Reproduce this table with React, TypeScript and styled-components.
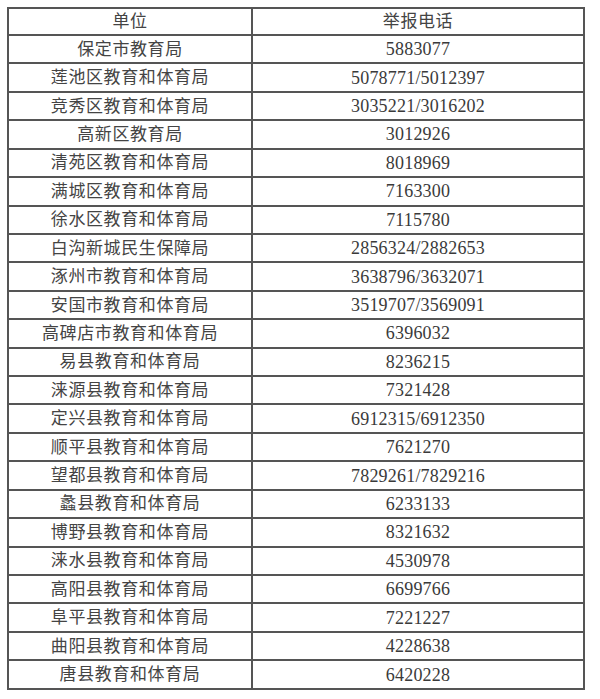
import * as React from "react";
import styled, { createGlobalStyle } from "styled-components";

const GlobalStyle = createGlobalStyle`
  html, body {
    margin: 0;
    padding: 0;
    background: #fff;
  }
  body {
    font-family: "Liberation Serif", "Noto Sans CJK SC", serif;
  }
`;

const Page = styled.div`
  padding: 7px 0 0 7px;
`;

const Table = styled.table`
  width: 578px;
  height: 683px;
  border-collapse: collapse;
  border: 2px solid #555;
  table-layout: fixed;
`;

const UnitCol = styled.col`
  width: 244px;
`;

const Cell = styled.td`
  border: 2px solid #555;
  padding: 0;
  text-align: center;
  vertical-align: middle;
  font-size: 17px;
  letter-spacing: 0.6px;
  color: #444;
  line-height: 1;
`;

const Num = styled.span`
  font-size: 18px;
  letter-spacing: 0.2px;
  color: #3a3a3a;
`;

const rows: [string, string][] = [
  ["保定市教育局", "5883077"],
  ["莲池区教育和体育局", "5078771/5012397"],
  ["竞秀区教育和体育局", "3035221/3016202"],
  ["高新区教育局", "3012926"],
  ["清苑区教育和体育局", "8018969"],
  ["满城区教育和体育局", "7163300"],
  ["徐水区教育和体育局", "7115780"],
  ["白沟新城民生保障局", "2856324/2882653"],
  ["涿州市教育和体育局", "3638796/3632071"],
  ["安国市教育和体育局", "3519707/3569091"],
  ["高碑店市教育和体育局", "6396032"],
  ["易县教育和体育局", "8236215"],
  ["涞源县教育和体育局", "7321428"],
  ["定兴县教育和体育局", "6912315/6912350"],
  ["顺平县教育和体育局", "7621270"],
  ["望都县教育和体育局", "7829261/7829216"],
  ["蠡县教育和体育局", "6233133"],
  ["博野县教育和体育局", "8321632"],
  ["涞水县教育和体育局", "4530978"],
  ["高阳县教育和体育局", "6699766"],
  ["阜平县教育和体育局", "7221227"],
  ["曲阳县教育和体育局", "4228638"],
  ["唐县教育和体育局", "6420228"],
];

export default function App() {
  return (
    <Page>
      <GlobalStyle />
      <Table>
        <colgroup>
          <UnitCol />
          <col />
        </colgroup>
        <tbody>
          <tr>
            <Cell>单位</Cell>
            <Cell>举报电话</Cell>
          </tr>
          {rows.map(([unit, phone]) => (
            <tr key={unit}>
              <Cell>{unit}</Cell>
              <Cell>
                <Num>{phone}</Num>
              </Cell>
            </tr>
          ))}
        </tbody>
      </Table>
    </Page>
  );
}
